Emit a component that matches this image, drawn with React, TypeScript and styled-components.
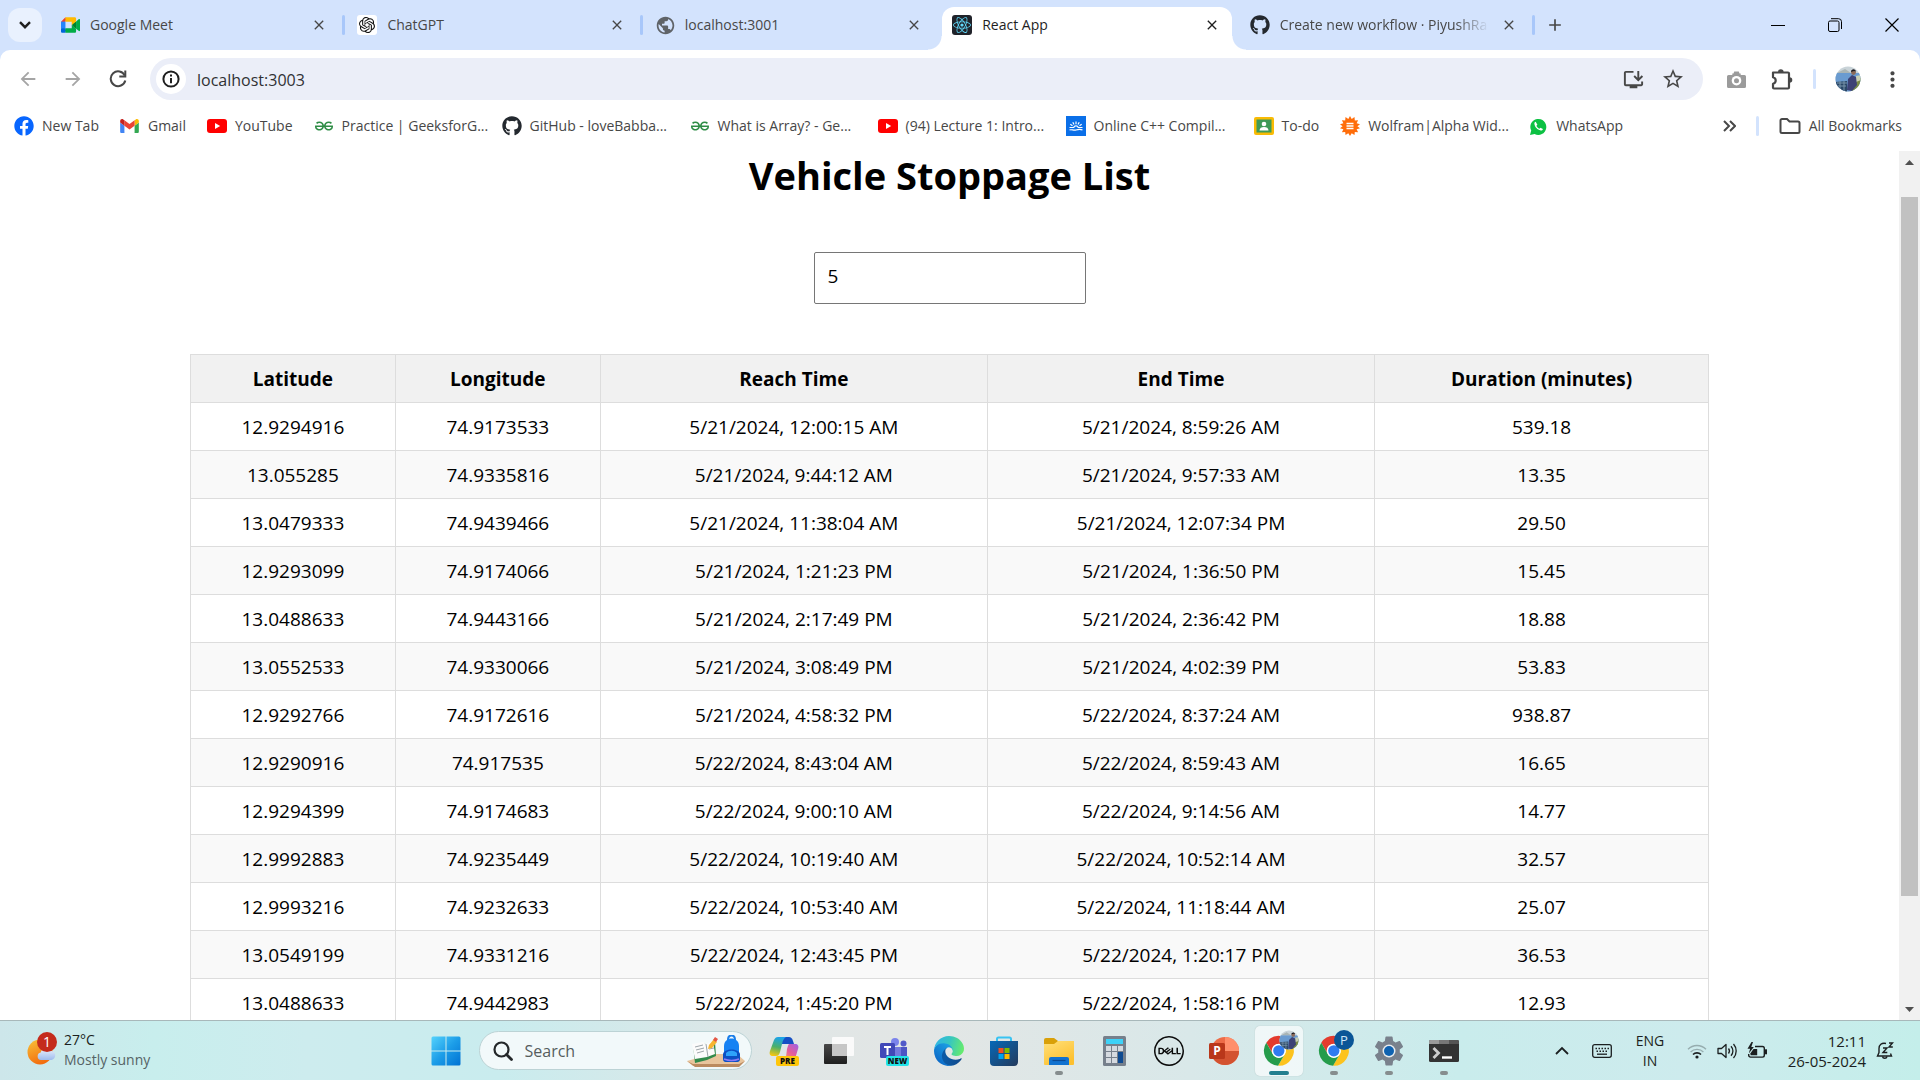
import React from "react";
import styled, { createGlobalStyle, css } from "styled-components";
import { FaFacebook, FaGithub, FaReact } from "react-icons/fa";
import { SiDell, SiGeeksforgeeks, SiOpenai } from "react-icons/si";
import {
  MdAdd,
  MdArrowBack,
  MdArrowForward,
  MdClose,
  MdInstallDesktop,
  MdMoreVert,
  MdPublic,
  MdSettings,
  MdStarBorder,
} from "react-icons/md";

const GlobalStyle = createGlobalStyle`
  *, *::before, *::after { box-sizing: border-box; }
  body {
    margin: 0;
    overflow: hidden;
    background: #fff;
    font-family: "Segoe UI", "Open Sans", "Noto Sans", sans-serif;
  }
  button, input { font-family: inherit; }
  button {
    padding: 0;
    border: 0;
    background: none;
    color: inherit;
  }
  svg { display: block; flex: none; }
`;

const Screen = styled.div`
  display: flex;
  flex-direction: column;
  height: 100vh;
  overflow: hidden;
`;

/* ---------- tab strip ---------- */

const TabStrip = styled.header`
  display: flex;
  align-items: flex-end;
  flex: none;
  height: 50px;
  padding-left: 8px;
  background: #d3e3fd;
`;

const TabSearch = styled.button`
  display: grid;
  place-items: center;
  width: 34px;
  height: 34px;
  margin: 0 4px 8px 0;
  border-radius: 12px;
  background: #e9f1fe;
  color: #1f1f1f;
`;

const Tabs = styled.div`
  display: flex;
  flex: 0 1 1487px;
  min-width: 0;
`;

const Tab = styled.div<{ $active?: boolean; $divider?: boolean }>`
  position: relative;
  display: flex;
  flex: 1 1 0;
  align-items: center;
  min-width: 0;
  height: 43px;
  padding: 0 12px 7px 14px;
  color: ${(p) => (p.$active ? "#1f1f1f" : "#474747")};

  ${(p) =>
    p.$divider &&
    css`
      &::after {
        content: "";
        position: absolute;
        top: 8px;
        right: -2px;
        width: 3px;
        height: 20px;
        border-radius: 2px;
        background: #a8c7fa;
      }
    `}

  ${(p) =>
    p.$active &&
    css`
      z-index: 1;
      isolation: isolate;

      &::before {
        content: "";
        position: absolute;
        z-index: -1;
        inset: 0 4px;
        border-radius: 12px 12px 0 0;
        background: #fff;
      }
    `}
`;

const TabFoot = styled.span<{ $side: "left" | "right" }>`
  position: absolute;
  bottom: 0;
  ${(p) => p.$side}: -10px;
  width: 14px;
  height: 14px;
  background: radial-gradient(
    circle at ${(p) => (p.$side === "left" ? "0 0" : "100% 0")},
    transparent 13px,
    #fff 14px
  );
`;

const TabTitle = styled.button<{ $fade?: boolean }>`
  display: flex;
  flex: 1;
  align-items: center;
  gap: 10px;
  min-width: 0;
  margin-right: 8px;
  overflow: hidden;
  font-size: 14px;
  line-height: 20px;
  white-space: nowrap;
  ${(p) => p.$fade && "mask-image: linear-gradient(90deg, #000 86%, transparent);"}
`;

const Favicon = styled.span<{ $bg?: string }>`
  display: grid;
  flex: none;
  place-items: center;
  width: 20px;
  height: 20px;
  border-radius: 3px;
  background: ${(p) => p.$bg ?? "transparent"};
`;

const CloseTab = styled.button`
  display: grid;
  flex: none;
  place-items: center;
  width: 24px;
  height: 24px;
`;

const NewTab = styled.button`
  display: grid;
  place-items: center;
  width: 34px;
  height: 34px;
  margin: 0 auto 8px 5px;
  color: #474747;
`;

const WindowButton = styled.button`
  display: grid;
  place-items: center;
  align-self: flex-start;
  width: 57px;
  height: 49px;
`;

/* ---------- toolbar ---------- */

const ToolbarWrap = styled.div`
  flex: none;
  background: #d3e3fd;
`;

const Toolbar = styled.div`
  display: flex;
  align-items: center;
  height: 58px;
  padding: 0 5px;
  border-radius: 10px 10px 0 0;
  background: #fff;
`;

const ToolButton = styled.button<{ $tone?: string }>`
  display: grid;
  flex: none;
  place-items: center;
  width: 45px;
  height: 42px;
  color: ${(p) => p.$tone ?? "#474747"};
`;

const Omnibox = styled.div`
  display: flex;
  flex: 1;
  align-items: center;
  height: 42px;
  margin: 0 11px 0 10px;
  padding: 0 10px 0 6px;
  border-radius: 21px;
  background: #ebeef8;
`;

const SiteInfo = styled.button`
  display: grid;
  flex: none;
  place-items: center;
  width: 30px;
  height: 30px;
  margin-right: 11px;
  border-radius: 50%;
  background: #fff;
  color: #1f1f1f;
`;

const Address = styled.input`
  flex: 1;
  min-width: 0;
  padding: 2px 0 0;
  border: 0;
  outline: 0;
  background: transparent;
  color: #303134;
  font-size: 16px;
  line-height: 24px;
`;

const OmniButton = styled.button`
  display: grid;
  place-items: center;
  width: 40px;
  height: 40px;
  color: #474747;
`;

const Rule = styled.span<{ $gap: number }>`
  flex: none;
  width: 3px;
  height: 20px;
  margin: 0 ${(p) => p.$gap}px;
  border-radius: 2px;
  background: #d3e3fd;
`;

/* ---------- bookmarks ---------- */

const BookmarkBar = styled.nav`
  display: flex;
  align-items: center;
  flex: none;
  gap: 21px;
  height: 43px;
  padding: 0 18px 7px 14px;
  background: #fff;
  color: #474747;
`;

const Bookmark = styled.a<{ $wide?: boolean }>`
  display: flex;
  flex: none;
  align-items: center;
  gap: 8px;
  width: ${(p) => (p.$wide ? "167px" : "auto")};
  color: inherit;
  font-size: 14px;
  line-height: 20px;
  text-decoration: none;
  white-space: nowrap;
`;

const BookmarkEnd = styled.div`
  display: flex;
  align-items: center;
  margin-left: auto;
`;

/* ---------- page ---------- */

const Viewport = styled.div`
  display: flex;
  flex: 1;
  min-height: 0;
  overflow: hidden;
  background: #fff;
`;

const Page = styled.main`
  display: flex;
  flex: 1;
  flex-direction: column;
  align-items: center;
  min-width: 0;
  color: #000;
`;

const Heading = styled.h1`
  margin: 0 0 53px;
  font-size: 38px;
  line-height: 48px;
  font-weight: 700;
`;

const MinutesInput = styled.input`
  flex: none;
  width: 272px;
  height: 52px;
  margin-bottom: 50px;
  padding: 8px 13px 12px;
  border: 1px solid #767676;
  border-radius: 2px;
  color: #000;
  font-size: 19px;
`;

const Table = styled.table`
  flex: none;
  width: 80%;
  table-layout: fixed;
  border-collapse: collapse;
  font-size: 19px;
  line-height: 26px;
  text-align: center;

  th,
  td {
    height: 48px;
    padding: 0 8px;
    border: 1px solid #ddd;
  }

  th {
    background: #f1f1f1;
    font-weight: 700;
  }

  tbody tr:nth-child(even) {
    background: #f9f9f9;
  }
`;

const Col = styled.col<{ $share: string }>`
  width: ${(p) => p.$share};
`;

const ScrollBar = styled.div`
  display: flex;
  flex: none;
  flex-direction: column;
  width: 21px;
  background: #f1f1f1;
`;

const ScrollArrow = styled.button`
  display: grid;
  place-items: center;
  width: 21px;
  height: 22px;
  color: #505050;
`;

const ScrollSpace = styled.div<{ $grow: number }>`
  flex: ${(p) => p.$grow} 1 0;
`;

const ScrollThumb = styled.div`
  flex: 699 1 0;
  margin: 0 2px;
  background: #c1c1c1;
`;

/* ---------- taskbar ---------- */

const Taskbar = styled.footer`
  display: grid;
  grid-template-columns: 1fr auto 1fr;
  flex: none;
  height: 60px;
  border-top: 1px solid #a8b8ba;
  background: linear-gradient(
    90deg,
    #cde6ea 0%,
    #c8eeed 8%,
    #cdecee 16%,
    #c9ecee 26%,
    #dfe6e6 40%,
    #e3e6e5 48%,
    #d9e8e9 62%,
    #c9ecec 76%,
    #cdebed 88%,
    #c4eeea 100%
  );
`;

const Weather = styled.button`
  display: flex;
  align-items: center;
  justify-self: start;
  gap: 7px;
  padding: 0 0 1px 25px;
  text-align: left;
`;

const Lines = styled.span<{ $align: "left" | "center" | "right"; $large?: boolean }>`
  display: flex;
  flex-direction: column;
  color: #1b1f20;
  font-size: ${(p) => (p.$large ? "15px" : "14px")};
  line-height: 20px;
  text-align: ${(p) => p.$align};
  white-space: nowrap;
`;

const Muted = styled.span`
  color: #566365;
`;

const Apps = styled.div`
  display: flex;
  align-items: center;
  padding-right: 30px;
`;

const AppButton = styled.button`
  display: flex;
  justify-content: center;
  width: 55px;
  height: 50px;
`;

const AppTile = styled.span<{ $active?: boolean }>`
  position: relative;
  display: grid;
  place-items: center;
  width: 48px;
  height: 50px;
  border-radius: 5px;
  background: ${(p) => (p.$active ? "rgba(255,255,255,0.65)" : "transparent")};
  box-shadow: ${(p) => (p.$active ? "0 0 1px rgba(0,0,0,0.25)" : "none")};
`;

const RunMark = styled.span<{ $active?: boolean }>`
  position: absolute;
  bottom: 1px;
  left: 50%;
  width: ${(p) => (p.$active ? "20px" : "8px")};
  height: 4px;
  border-radius: 2px;
  background: ${(p) => (p.$active ? "#237f8f" : "#868d8e")};
  transform: translateX(-50%);
`;

const SearchBox = styled.label`
  display: flex;
  align-items: center;
  width: 273px;
  height: 39px;
  margin: 0 5px;
  padding: 0 6px 0 13px;
  border: 1px solid #bcd3d5;
  border-radius: 20px;
  background: #f2f9fa;
`;

const SearchInput = styled.input`
  flex: 1;
  min-width: 0;
  padding: 0 0 0 12px;
  border: 0;
  outline: 0;
  background: transparent;
  font-size: 16px;

  &::placeholder {
    color: #565d5e;
    opacity: 1;
  }
`;

const Tray = styled.div`
  display: flex;
  align-items: center;
  justify-content: flex-end;
  padding-right: 26px;
  color: #1b1f20;
`;

const TrayButton = styled.button<{ $width: number }>`
  display: grid;
  place-items: center;
  width: ${(p) => p.$width}px;
  height: 48px;
`;

const StatusButton = styled.button`
  display: flex;
  align-items: center;
  justify-content: flex-end;
  gap: 10px;
  width: 97px;
  height: 48px;
  padding-right: 6px;
`;

const Clock = styled.button`
  display: flex;
  align-items: center;
  justify-content: flex-end;
  gap: 10px;
  width: 121px;
  height: 48px;
`;

/* ---------- drawings ---------- */

const ChevronDownIcon = () => (
  <svg width="12" height="8" viewBox="0 0 12 8" fill="none" stroke="currentColor" strokeWidth="2.4">
    <path d="M1 1.200l5 5 5-5" />
  </svg>
);

const ReloadIcon = () => (
  <svg width="18" height="18" viewBox="0 0 18 18" fill="none" stroke="currentColor" strokeWidth="2">
    <path d="M15.800 5.500A7.400 7.400 0 1 0 16.300 10.500" />
    <path d="M16.300.500v6h-6" />
  </svg>
);

const InfoIcon = () => (
  <svg width="18" height="18" viewBox="0 0 18 18" fill="none" stroke="currentColor" strokeWidth="2">
    <circle cx="9" cy="9" r="7.600" />
    <path d="M9 8v5.200M9 4.600v2" />
  </svg>
);

const ExtensionIcon = () => (
  <svg width="22" height="22" viewBox="0 0 22 22">
    <path
      d="M2 4.500h15a1 1 0 0 1 1 1v14a1 1 0 0 1-1 1H3a1 1 0 0 1-1-1v-3.700c3.600-1 3.600-5.600 0-6.600z"
      fill="none"
      stroke="currentColor"
      strokeWidth="2.200"
      strokeLinejoin="round"
    />
    <path d="M7 4a2.800 2.800 0 0 1 5.600 0zM18.500 9.200a2.800 2.800 0 0 1 0 5.600z" fill="currentColor" />
  </svg>
);

const DoubleChevronIcon = () => (
  <svg width="13" height="12" viewBox="0 0 13 12" fill="none" stroke="currentColor" strokeWidth="2">
    <path d="M1 1l5 5-5 5M7 1l5 5-5 5" />
  </svg>
);

const FolderIcon = () => (
  <svg width="22" height="16" viewBox="0 0 22 16" fill="none" stroke="currentColor" strokeWidth="2">
    <path d="M1.500 2.500a1.500 1.500 0 0 1 1.500-1.500h5l2.500 2.500H19A1.500 1.500 0 0 1 20.500 5v8.500A1.500 1.500 0 0 1 19 15H3a1.500 1.500 0 0 1-1.500-1.500z" />
  </svg>
);

const MeetIcon = () => (
  <svg width="19" height="16" viewBox="0 0 87.5 72">
    <path fill="#00832d" d="M49.5 36l8.53 9.75 11.47 7.33 2-17.02-2-16.64-11.69 6.44z" />
    <path fill="#0066da" d="M0 51.5V66c0 3.3 2.7 6 6 6h14.5l3-10.96-3-9.54-9.95-3z" />
    <path fill="#e94235" d="M20.5 0L0 20.5l10.55 3 9.95-3 2.95-9.41z" />
    <path fill="#2684fc" d="M20.5 20.5H0v31h20.5z" />
    <path
      fill="#00ac47"
      d="M82.6 8.68L69.5 19.42v33.66l13.16 10.79c1.97 1.54 4.85.13 4.85-2.37V11c0-2.53-2.95-3.92-4.91-2.32zM49.5 36v15.5h-29V72h43c3.3 0 6-2.7 6-6V53.08z"
    />
    <path fill="#ffba00" d="M63.5 0h-43v20.5h29V36l20-16.57V6c0-3.3-2.7-6-6-6z" />
  </svg>
);

const GmailIcon = () => (
  <svg width="19" height="14" viewBox="52 42 88 66">
    <path fill="#4285f4" d="M58 108h14V74L52 59v43c0 3.32 2.69 6 6 6" />
    <path fill="#34a853" d="M120 108h14c3.32 0 6-2.69 6-6V59l-20 15" />
    <path fill="#fbbc04" d="M120 48v26l20-15v-8c0-7.42-8.47-11.65-14.4-7.2" />
    <path fill="#ea4335" d="M72 74V48l24 18 24-18v26L96 92" />
    <path fill="#c5221f" d="M52 51v8l20 15V48l-5.6-4.2c-5.94-4.45-14.4-.22-14.4 7.2" />
  </svg>
);

const YouTubeIcon = () => (
  <svg width="20" height="14" viewBox="0 0 20 14">
    <rect width="20" height="14" rx="3" fill="#f00" />
    <path d="M8 4l5.2 3L8 10z" fill="#fff" />
  </svg>
);

const CompilerIcon = () => (
  <svg width="20" height="20" viewBox="0 0 20 20">
    <rect width="20" height="20" fill="#0a6fe8" />
    <g stroke="#fff" strokeWidth="1.2" fill="none">
      <path d="M3.5 11.5h4.2a2.4 2.4 0 0 1 4.6 0h4.2M3.5 14c2-1 4 .8 6.5 0s4.500-1 6.500 0" />
      <path d="M10 5.500v2.800M6.800 6.200l1.200 2.400M13.200 6.200L12 8.600M4.300 8.300l2.200 1.500M15.700 8.300l-2.200 1.500" />
    </g>
  </svg>
);

const ClassroomIcon = () => (
  <svg width="20" height="18" viewBox="0 0 20 18">
    <rect width="20" height="18" rx="2" fill="#f9bb05" />
    <rect x="2.500" y="2.500" width="15" height="13" fill="#3f9a57" />
    <circle cx="10" cy="7" r="2.300" fill="#fff" />
    <path d="M5.500 13.500c0-2.500 2-3.600 4.500-3.600s4.500 1.100 4.500 3.600z" fill="#fff" />
  </svg>
);

const WolframIcon = () => (
  <svg width="20" height="20" viewBox="0 0 20 20">
    <path
      fill="#ff6d0a"
      d="M10 0l1.700 3 2.800-1.900.3 3.400 3.300-.3-1.500 3L20 8.300l-2.600 1.900 2.600 2-3.400 1 1.500 3-3.300-.3-.3 3.200-2.800-1.800L10 20l-1.700-2.700-2.800 1.800-.3-3.200-3.300.3 1.500-3-3.400-1 2.600-2L0 8.300l3.400-1.100-1.500-3 3.300.3.3-3.400L8.300 3z"
    />
    <path d="M6.500 7.500h7M6.500 10h7M6.500 12.500h7" stroke="#fff" strokeWidth="1.300" />
  </svg>
);

const WhatsAppIcon = () => (
  <svg width="19" height="19" viewBox="0 0 19 19">
    <path d="M1 18l1.200-4.400A8 8 0 1 1 5.600 17z" fill="#0cc143" />
    <path
      d="M6.700 4.800c-.9.300-1.500 1.200-1.300 2.300.5 3 3 5.800 6.300 6.400 1 .1 2-.4 2.200-1.500l-2.400-1.300-1.100 1.100c-1.300-.6-2.500-1.800-3-3l1-1z"
      fill="#fff"
    />
  </svg>
);

const Portrait = ({ size }: { size: number }) => (
  <svg width={size} height={size} viewBox="0 0 26 26">
    <defs>
      <clipPath id={`portrait${size}`}>
        <circle cx="13" cy="13" r="12.500" />
      </clipPath>
    </defs>
    <g clipPath={`url(#portrait${size})`}>
      <rect width="26" height="26" fill="#c9d3d8" />
      <path d="M2 7l8-4 6 4z" fill="#a9b4b4" />
      <rect y="7" width="26" height="19" fill="#6a9bd0" />
      <path d="M0 16l12-1v11H0z" fill="#2b4868" />
      <path d="M17 14l9-2v14h-9z" fill="#7a8c45" />
      <path d="M21 10l5-1v5l-5 2z" fill="#c9d0b4" />
      <path d="M2 17h10M2 20h9M5 15v10M9 15v10" stroke="#7894ab" />
      <path d="M13 13l4-4 4 2 1 8-5 6-5-1z" fill="#3d4275" />
      <circle cx="18.500" cy="6.500" r="2.400" fill="#8c6a58" />
      <path d="M16 6c0-3 4-4 5-.5l-2-.5z" fill="#1c1a20" />
    </g>
  </svg>
);

const CameraIcon = () => (
  <svg width="19" height="17" viewBox="0 0 19 17">
    <path
      d="M1.500 4h3.800v-1.500h1.200L7.200.500h4.600l.7 2h1.200V4h3.800A1.500 1.500 0 0 1 19 5.500v10a1.500 1.500 0 0 1-1.500 1.500h-16A1.500 1.500 0 0 1 0 15.500v-10A1.500 1.500 0 0 1 1.500 4z"
      fill="#9b9b9b"
    />
    <circle cx="9.500" cy="9.700" r="4.800" fill="#fff" />
    <circle cx="9.500" cy="9.700" r="2.500" fill="#9b9b9b" />
  </svg>
);

const WeatherIcon = () => (
  <svg width="32" height="36" viewBox="0 0 32 36">
    <defs>
      <linearGradient id="sun" x1="0.200" y1="0" x2="0.600" y2="1">
        <stop offset="0" stopColor="#f8bd36" />
        <stop offset="1" stopColor="#f2690d" />
      </linearGradient>
      <linearGradient id="cloud" x1="0" y1="0" x2="0" y2="1">
        <stop offset="0" stopColor="#e8effc" />
        <stop offset="1" stopColor="#9dbbee" />
      </linearGradient>
    </defs>
    <circle cx="15" cy="20" r="12.500" fill="url(#sun)" />
    <path d="M16 28a3.800 3.800 0 0 1-.3-7.500 5 5 0 0 1 9-1.600 4.600 4.600 0 0 1 1.800 9.100z" fill="url(#cloud)" />
    <circle cx="22" cy="10" r="10" fill="#c42b1c" />
    <text x="22" y="15" textAnchor="middle" fontSize="14" fill="#fff">
      1
    </text>
  </svg>
);

const StartIcon = () => (
  <svg width="30" height="30" viewBox="0 0 30 30">
    <defs>
      <linearGradient id="start" gradientUnits="userSpaceOnUse" x1="0" y1="0" x2="30" y2="30">
        <stop offset="0" stopColor="#56d4fd" />
        <stop offset="0.500" stopColor="#1c9de8" />
        <stop offset="1" stopColor="#0070d2" />
      </linearGradient>
    </defs>
    <path
      fill="url(#start)"
      d="M2 0.500h12.500v14H0.500V2A1.500 1.500 0 0 1 2 .5zM15.500.500H28A1.500 1.500 0 0 1 29.500 2v12.500h-14zM.500 15.500h14v14H2A1.500 1.500 0 0 1 .5 28zM15.500 15.500h14V28a1.500 1.500 0 0 1-1.500 1.500H15.500z"
    />
  </svg>
);

const MagnifierIcon = () => (
  <svg width="20" height="20" viewBox="0 0 20 20" fill="none" stroke="#24282a" strokeWidth="2.200">
    <circle cx="8.500" cy="8.500" r="7" />
    <path d="M13.500 13.500l5 5" strokeLinecap="round" strokeWidth="2.800" />
  </svg>
);

const SchoolArt = () => (
  <svg width="58" height="32" viewBox="0 0 58 32">
    <path d="M0 26l24-7h26l8 7-6 5H6z" fill="#e8c49c" />
    <path d="M0 26l6 3h46l6-3-6 6H8z" fill="#bb8a5f" />
    <path d="M6 10l11-2 3 2 8-3 1 14-9 4-12 3z" fill="#318a4b" />
    <path d="M5 9l11-2 3 2 7-3 2 13-8 3-12 2z" fill="#fbfbfb" />
    <path d="M19 9l2 13M8 12l8-2M9 15l8-2M10 18l7-2M22 11l4-1M22 14l5-1" stroke="#9da5aa" fill="none" />
    <path d="M21 14l1-4 5-6 3 3-5 6z" fill="#f7b531" />
    <path d="M26 5l2-3 3 2-2 3z" fill="#e45745" />
    <path d="M41 5c0-6 7-6 7 0" fill="none" stroke="#1c7ee8" strokeWidth="2" />
    <path d="M37 11c0-10 15-10 15 0v13a3 3 0 0 1-3 3h-9a3 3 0 0 1-3-3z" fill="#1682f3" />
    <path d="M36 19c1-6 16-6 17 0v5a3 3 0 0 1-3 3H39a3 3 0 0 1-3-3z" fill="#0c50c4" />
    <path d="M39 18c3-3 8-3 11 0v3H39z" fill="#2ea3fa" />
    <path d="M37 24c5 2 10 2 15 0" stroke="#8c7bf5" fill="none" strokeWidth="1.500" />
  </svg>
);

const CopilotIcon = () => (
  <svg width="30" height="30" viewBox="0 0 30 30">
    <defs>
      <linearGradient id="copA" x1="0.400" y1="0" x2="0.200" y2="1">
        <stop offset="0" stopColor="#1ca3e8" />
        <stop offset="0.500" stopColor="#4bb06a" />
        <stop offset="1" stopColor="#ffc80a" />
      </linearGradient>
      <linearGradient id="copB" x1="1" y1="0" x2="0.300" y2="1">
        <stop offset="0" stopColor="#9b62e8" />
        <stop offset="0.500" stopColor="#e45b9c" />
        <stop offset="1" stopColor="#ff9b62" />
      </linearGradient>
    </defs>
    <path d="M9 1h11c2 0 3 1 4 4l1 3h-7L13 8z" fill="#154fc4" />
    <path d="M9 1h8c-2 1-3 3-4 7l-2 8c-1 3-2 4-4 4H4c-3 0-4-2-3-5L5 4c1-2 2-3 4-3z" fill="url(#copA)" />
    <path d="M20 8h6c3 0 4 2 3 5l-3 10c-1 3-3 4-5 4h-8c2-1 3-3 4-6l1-8c1-3 1-4 2-5z" fill="url(#copB)" />
    <rect x="7" y="20" width="23" height="10" rx="2" fill="#ffc60a" />
    <text x="18.500" y="28" textAnchor="middle" fontSize="8" fontWeight="800" fill="#111">
      PRE
    </text>
  </svg>
);

const TaskViewIcon = () => (
  <svg width="30" height="30" viewBox="0 0 30 30">
    <defs>
      <linearGradient id="tvDark" x1="0" y1="0" x2="0" y2="1">
        <stop offset="0" stopColor="#484848" />
        <stop offset="1" stopColor="#1f1f1f" />
      </linearGradient>
    </defs>
    <rect x="0" y="8" width="23" height="20" rx="1" fill="url(#tvDark)" />
    <rect x="8" y="1" width="22" height="19" rx="1" fill="#fafafa" />
    <path d="M8 8h15v12H8z" fill="#c6c6c6" />
  </svg>
);

const TeamsIcon = () => (
  <svg width="30" height="30" viewBox="0 0 30 30">
    <circle cx="16" cy="6" r="4" fill="#7b83eb" />
    <circle cx="24.500" cy="7.500" r="3" fill="#5059c9" />
    <path d="M10 11h12v13H10z" fill="#7479dd" />
    <path d="M22 11h6v11h-6z" fill="#4d55c5" />
    <rect x="1" y="7" width="15" height="15" rx="1.500" fill="#4148b8" />
    <path d="M5 11h7M8.500 11v8" stroke="#fff" strokeWidth="2" />
    <rect x="7" y="20" width="23" height="10" rx="2" fill="#22e3e8" />
    <text x="18.500" y="28" textAnchor="middle" fontSize="8" fontWeight="800" fill="#111">
      NEW
    </text>
  </svg>
);

const EdgeIcon = () => (
  <svg width="30" height="30" viewBox="0 0 256 256">
    <defs>
      <linearGradient id="edgeA" x1="0.200" y1="0.500" x2="1" y2="0.500">
        <stop offset="0" stopColor="#0c59a4" />
        <stop offset="1" stopColor="#114a8b" />
      </linearGradient>
      <linearGradient id="edgeB" x1="0.800" y1="0.200" x2="0.200" y2="1">
        <stop offset="0" stopColor="#1b9de2" />
        <stop offset="1" stopColor="#0a62c4" />
      </linearGradient>
      <linearGradient id="edgeC" x1="0" y1="0.300" x2="1" y2="0.500">
        <stop offset="0" stopColor="#2fb4e8" />
        <stop offset="0.500" stopColor="#37c6c0" />
        <stop offset="1" stopColor="#66eb6e" />
      </linearGradient>
    </defs>
    <path
      fill="url(#edgeA)"
      d="M231 190.500c-3.400 1.800-6.900 3.400-10.500 4.700a101.900 101.900 0 0 1-35.900 6.400c-47.300 0-88.500-32.500-88.500-74.300a31.500 31.500 0 0 1 16.400-27.300c-42.800 1.800-53.800 46.400-53.800 72.500 0 74 68.100 81.400 82.800 81.400 7.900 0 19.800-2.300 27-4.600l1.300-.4a128.300 128.300 0 0 0 66.600-52.800 4 4 0 0 0-5.400-5.600z"
    />
    <path
      fill="url(#edgeB)"
      d="M105.700 241.400a79.200 79.200 0 0 1-22.700-21.300 80.700 80.700 0 0 1 29.500-120c3.200-1.500 8.500-4.100 15.600-4a32.400 32.400 0 0 1 25.700 13 31.900 31.900 0 0 1 6.300 18.700c0-.2 24.500-79.600-80-79.600-43.900 0-80 41.600-80 78.200a130.200 130.200 0 0 0 12.100 56 128 128 0 0 0 156.400 67 75.500 75.500 0 0 1-62.800-8z"
    />
    <path
      fill="url(#edgeC)"
      d="M152.300 148.900c-.9 1-3.400 2.500-3.400 5.600 0 2.600 1.700 5.200 4.800 7.300 14.300 10 41.400 8.600 41.500 8.600 10.700 0 21.100-2.900 30.300-8.300a61.400 61.400 0 0 0 30.400-52.900c.3-22.400-8-37.300-11.300-43.900C223.500 23.900 177.700 0 128 0 57.600 0 .5 56.600 0 127.100c.5-36.500 36.800-66 80-66 3.500 0 23.500.3 42 10.100 16.300 8.500 24.900 18.900 30.800 29.200 6.200 10.700 7.300 24.100 7.300 29.500 0 5.300-2.700 13.300-7.800 19z"
    />
  </svg>
);

const StoreIcon = () => (
  <svg width="30" height="30" viewBox="0 0 30 30">
    <defs>
      <linearGradient id="store" x1="0" y1="0" x2="1" y2="1">
        <stop offset="0" stopColor="#0669b8" />
        <stop offset="1" stopColor="#243a5c" />
      </linearGradient>
    </defs>
    <path d="M8 6V3a1.500 1.500 0 0 1 1.500-1.500h11A1.500 1.500 0 0 1 22 3v3" fill="none" stroke="#38c3f2" strokeWidth="2" />
    <path d="M1 5h28v21a4 4 0 0 1-4 4H5a4 4 0 0 1-4-4z" fill="url(#store)" />
    <path d="M9.500 12h5v5h-5z" fill="#f25022" />
    <path d="M15.500 12h5v5h-5z" fill="#7fba00" />
    <path d="M9.500 18h5v5h-5z" fill="#00a4ef" />
    <path d="M15.500 18h5v5h-5z" fill="#ffb900" />
  </svg>
);

const ExplorerIcon = () => (
  <svg width="30" height="30" viewBox="0 0 30 30">
    <defs>
      <linearGradient id="folder" x1="0" y1="0" x2="0.600" y2="1">
        <stop offset="0" stopColor="#ffe07a" />
        <stop offset="1" stopColor="#fdc02f" />
      </linearGradient>
    </defs>
    <path d="M0 4a2 2 0 0 1 2-2h8l4 3-2 5H0z" fill="#d9a009" />
    <path d="M0 8h10l4-3h16v23a1 1 0 0 1-1 1H1a1 1 0 0 1-1-1z" fill="url(#folder)" />
    <path d="M5 29v-6a2 2 0 0 1 2-2h16a2 2 0 0 1 2 2v6z" fill="#1272cf" />
    <path d="M8.500 24.500h13" stroke="#0b4a94" strokeWidth="1.200" />
  </svg>
);

const CalculatorIcon = () => (
  <svg width="23" height="30" viewBox="0 0 23 30">
    <rect width="23" height="30" rx="1.500" fill="#76808c" />
    <rect x="3" y="3" width="17" height="5" fill="#3ed2f8" />
    {[10, 16, 22].map((y) =>
      [3, 9, 15].map((x) => <rect key={`${x}-${y}`} x={x} y={y} width="5" height="5" fill="#d5dae0" />)
    )}
    <rect x="15" y="16" width="5" height="11" fill="#0f4b91" />
  </svg>
);

const PowerPointIcon = () => (
  <svg width="30" height="30" viewBox="0 0 30 30">
    <circle cx="16" cy="15" r="14" fill="#ed6c47" />
    <path d="M16 1a14 14 0 0 1 14 14H16z" fill="#ff8f6b" />
    <path d="M2 15h28a14 14 0 0 1-28 0z" fill="#d35230" />
    <rect x="0" y="7" width="16" height="16" rx="1.500" fill="#b9371a" />
    <text x="8" y="19" textAnchor="middle" fontSize="12" fontWeight="700" fill="#fff">
      P
    </text>
  </svg>
);

const ChromeIcon = ({ badge }: { badge: "portrait" | "letter" }) => (
  <svg width="42" height="42" viewBox="0 0 42 42">
    <g transform="translate(4.500 4.500) scale(0.680)">
      <path d="M5.540 12.030A22 22 0 0 1 43.600 14H24a10 10 0 0 0-8.660 15z" fill="#e33b2e" />
      <path d="M43.600 14a22 22 0 0 1-20.740 31.970L32.660 29A10 10 0 0 0 24 14z" fill="#fcc31e" />
      <path d="M22.860 45.970A22 22 0 0 1 5.540 12.030L15.340 29a10 10 0 0 0 17.320 0z" fill="#259c4b" />
      <circle cx="24" cy="24" r="10.500" fill="#fff" />
      <circle cx="24" cy="24" r="8.300" fill="#2f7bf0" />
    </g>
    {badge === "portrait" ? (
      <g transform="translate(21 0)">
        <Portrait size={20} />
      </g>
    ) : (
      <>
        <circle cx="31" cy="10" r="10" fill="#0a5597" />
        <text x="31" y="15" textAnchor="middle" fontSize="13" fill="#cfe6f8">
          P
        </text>
      </>
    )}
  </svg>
);

const SettingsIcon = () => (
  <svg width="30" height="30" viewBox="0 0 30 30">
    <MdSettings x={-3} y={-3} size={36} color="#79818c" />
    <circle cx="15" cy="15" r="7.500" fill="#79818c" />
    <circle cx="15" cy="15" r="6.500" fill="#e7ebee" />
    <circle cx="15" cy="15" r="5" fill="#0f62b0" />
  </svg>
);

const TerminalIcon = () => (
  <svg width="30" height="22" viewBox="0 0 30 22">
    <rect width="30" height="22" rx="1.500" fill="#333" />
    <path d="M1.500 0H10v4H0V1.500A1.500 1.500 0 0 1 1.500 0z" fill="#9a9a9a" />
    <path d="M10 0h10v4H10z" fill="#777" />
    <path d="M20 0h8.500A1.500 1.500 0 0 1 30 1.500V4H20z" fill="#555" />
    <path d="M4.500 8l5 5-5 5" fill="none" stroke="#ccc" strokeWidth="2.800" />
    <path d="M13 17.500h10" stroke="#fff" strokeWidth="2.400" />
  </svg>
);

const ChevronUpIcon = () => (
  <svg width="14" height="9" viewBox="0 0 14 9" fill="none" stroke="currentColor" strokeWidth="1.800">
    <path d="M1 8l6-6 6 6" />
  </svg>
);

const KeyboardIcon = () => (
  <svg width="20" height="14" viewBox="0 0 20 14" fill="none" stroke="currentColor">
    <rect x="0.700" y="0.700" width="18.600" height="12.600" rx="2" strokeWidth="1.300" />
    <path d="M3.500 4.500h14M4.500 7.200h12" strokeWidth="1.500" strokeDasharray="1.500 1.500" />
    <path d="M5 10.200h10" strokeWidth="1.300" />
  </svg>
);

const WifiIcon = () => (
  <svg width="20" height="16" viewBox="0 0 20 16" fill="none" stroke="currentColor">
    <path d="M1 6.200a12.800 12.800 0 0 1 18 0M3.600 9a9 9 0 0 1 12.800 0" opacity="0.300" strokeWidth="1.300" />
    <path d="M6 11.500a5.700 5.700 0 0 1 8 0" strokeWidth="1.600" />
    <circle cx="10" cy="14" r="1.600" fill="currentColor" stroke="none" />
  </svg>
);

const VolumeIcon = () => (
  <svg width="20" height="18" viewBox="0 0 20 18" fill="none" stroke="currentColor" strokeWidth="1.300">
    <path d="M1 6.500h3.500L9 2.500v13l-4.500-4H1z" strokeLinejoin="round" />
    <path d="M11.500 6.500a4 4 0 0 1 0 5M14 4.200a7 7 0 0 1 0 9.600M16.500 2a10.500 10.500 0 0 1 0 14" />
  </svg>
);

const BatteryIcon = () => (
  <svg width="20" height="18" viewBox="0 0 20 18" fill="none" stroke="currentColor" strokeWidth="1.400">
    <path d="M8 4.500h7.500a1.800 1.800 0 0 1 1.800 1.800v7a1.800 1.800 0 0 1-1.800 1.800h-12a1.800 1.800 0 0 1-1.800-1.800V12" />
    <path d="M18.300 8h1.200v3.600h-1.200z" fill="currentColor" />
    <path d="M3.500 13.300v-2l3-4.300h3.700v6.300z" fill="currentColor" stroke="none" />
    <path d="M4.500 0L.5 6.800h2.600L1.800 11.500l5-6.500H4.300L6 0z" fill="currentColor" stroke="none" />
  </svg>
);

const BellIcon = () => (
  <svg width="18" height="18" viewBox="0 0 18 18" fill="none" stroke="currentColor" strokeWidth="1.400">
    <path d="M10 1.500C5.500.5 3 3 3 6.500v4L1.500 14h14L14.500 11.500" />
    <path d="M6.500 14.500a2.300 2.300 0 0 0 4.500 0" />
    <path d="M7 6h4l-4 4.500h4.300M13 1h3.500L13 5h3.800" />
  </svg>
);

/* ---------- data ---------- */

type TabInfo = {
  title: string;
  icon: React.ReactNode;
  bg?: string;
  active?: boolean;
  divider?: boolean;
  fade?: boolean;
};

const tabs: TabInfo[] = [
  { title: "Google Meet", icon: <MeetIcon />, divider: true },
  { title: "ChatGPT", icon: <SiOpenai size={16} color="#111" />, bg: "#fff", divider: true },
  { title: "localhost:3001", icon: <MdPublic size={21} color="#5f6368" /> },
  { title: "React App", icon: <FaReact size={18} color="#61dafb" />, bg: "#20232a", active: true },
  {
    title: "Create new workflow · PiyushRa",
    icon: <FaGithub size={20} color="#24292f" />,
    divider: true,
    fade: true,
  },
];

type BookmarkInfo = { label: string; icon: React.ReactNode; wide?: boolean };

const bookmarks: BookmarkInfo[] = [
  { label: "New Tab", icon: <FaFacebook size={20} color="#0866ff" /> },
  { label: "Gmail", icon: <GmailIcon /> },
  { label: "YouTube", icon: <YouTubeIcon /> },
  { label: "Practice | GeeksforG...", icon: <SiGeeksforgeeks size={18} color="#2f8d46" />, wide: true },
  { label: "GitHub - loveBabba...", icon: <FaGithub size={20} color="#24292f" />, wide: true },
  { label: "What is Array? - Ge...", icon: <SiGeeksforgeeks size={18} color="#2f8d46" />, wide: true },
  { label: "(94) Lecture 1: Intro...", icon: <YouTubeIcon />, wide: true },
  { label: "Online C++ Compil...", icon: <CompilerIcon />, wide: true },
  { label: "To-do", icon: <ClassroomIcon /> },
  { label: "Wolfram|Alpha Wid...", icon: <WolframIcon />, wide: true },
  { label: "WhatsApp", icon: <WhatsAppIcon /> },
];

const stops: string[][] = [
  ["12.9294916", "74.9173533", "5/21/2024, 12:00:15 AM", "5/21/2024, 8:59:26 AM", "539.18"],
  ["13.055285", "74.9335816", "5/21/2024, 9:44:12 AM", "5/21/2024, 9:57:33 AM", "13.35"],
  ["13.0479333", "74.9439466", "5/21/2024, 11:38:04 AM", "5/21/2024, 12:07:34 PM", "29.50"],
  ["12.9293099", "74.9174066", "5/21/2024, 1:21:23 PM", "5/21/2024, 1:36:50 PM", "15.45"],
  ["13.0488633", "74.9443166", "5/21/2024, 2:17:49 PM", "5/21/2024, 2:36:42 PM", "18.88"],
  ["13.0552533", "74.9330066", "5/21/2024, 3:08:49 PM", "5/21/2024, 4:02:39 PM", "53.83"],
  ["12.9292766", "74.9172616", "5/21/2024, 4:58:32 PM", "5/22/2024, 8:37:24 AM", "938.87"],
  ["12.9290916", "74.917535", "5/22/2024, 8:43:04 AM", "5/22/2024, 8:59:43 AM", "16.65"],
  ["12.9294399", "74.9174683", "5/22/2024, 9:00:10 AM", "5/22/2024, 9:14:56 AM", "14.77"],
  ["12.9992883", "74.9235449", "5/22/2024, 10:19:40 AM", "5/22/2024, 10:52:14 AM", "32.57"],
  ["12.9993216", "74.9232633", "5/22/2024, 10:53:40 AM", "5/22/2024, 11:18:44 AM", "25.07"],
  ["13.0549199", "74.9331216", "5/22/2024, 12:43:45 PM", "5/22/2024, 1:20:17 PM", "36.53"],
  ["13.0488633", "74.9442983", "5/22/2024, 1:45:20 PM", "5/22/2024, 1:58:16 PM", "12.93"],
];

type AppInfo = { name: string; icon: React.ReactNode; running?: boolean; active?: boolean };

const apps: AppInfo[] = [
  { name: "Copilot", icon: <CopilotIcon /> },
  { name: "Task View", icon: <TaskViewIcon /> },
  { name: "Teams", icon: <TeamsIcon /> },
  { name: "Edge", icon: <EdgeIcon /> },
  { name: "Store", icon: <StoreIcon /> },
  { name: "File Explorer", icon: <ExplorerIcon />, running: true },
  { name: "Calculator", icon: <CalculatorIcon /> },
  { name: "Dell", icon: <SiDell size={30} color="#0b0b0b" /> },
  { name: "PowerPoint", icon: <PowerPointIcon /> },
  { name: "Chrome", icon: <ChromeIcon badge="portrait" />, running: true, active: true },
  { name: "Chrome, second profile", icon: <ChromeIcon badge="letter" />, running: true },
  { name: "Settings", icon: <SettingsIcon />, running: true },
  { name: "Terminal", icon: <TerminalIcon />, running: true },
];

export default function App() {
  return (
    <Screen>
      <GlobalStyle />
      <TabStrip>
        <TabSearch aria-label="Search tabs">
          <ChevronDownIcon />
        </TabSearch>
        <Tabs>
          {tabs.map((tab) => (
            <Tab key={tab.title} $active={tab.active} $divider={tab.divider}>
              {tab.active && (
                <>
                  <TabFoot $side="left" />
                  <TabFoot $side="right" />
                </>
              )}
              <TabTitle $fade={tab.fade}>
                <Favicon $bg={tab.bg}>{tab.icon}</Favicon>
                {tab.title}
              </TabTitle>
              <CloseTab aria-label="Close tab">
                <MdClose size={16} />
              </CloseTab>
            </Tab>
          ))}
        </Tabs>
        <NewTab aria-label="New tab">
          <MdAdd size={20} />
        </NewTab>
        <WindowButton aria-label="Minimize">
          <svg width="14" height="14" viewBox="0 0 14 14">
            <path d="M0 7.500h14" stroke="#000" />
          </svg>
        </WindowButton>
        <WindowButton aria-label="Restore">
          <svg width="14" height="14" viewBox="0 0 14 14" fill="none" stroke="#000">
            <rect x="0.500" y="3" width="10.500" height="10.500" rx="1.500" />
            <path d="M3 .7h7.500a3 3 0 0 1 3 3V11" />
          </svg>
        </WindowButton>
        <WindowButton aria-label="Close window">
          <svg width="14" height="14" viewBox="0 0 14 14" stroke="#000" strokeWidth="1.200">
            <path d="M.5.500l13 13M13.500.500l-13 13" />
          </svg>
        </WindowButton>
      </TabStrip>

      <ToolbarWrap>
        <Toolbar>
          <ToolButton aria-label="Back" $tone="#a5a5a5">
            <MdArrowBack size={22} />
          </ToolButton>
          <ToolButton aria-label="Forward" $tone="#a5a5a5">
            <MdArrowForward size={22} />
          </ToolButton>
          <ToolButton aria-label="Reload">
            <ReloadIcon />
          </ToolButton>
          <Omnibox>
            <SiteInfo aria-label="Site information">
              <InfoIcon />
            </SiteInfo>
            <Address aria-label="Address" defaultValue="localhost:3003" />
            <OmniButton aria-label="Install app">
              <MdInstallDesktop size={23} />
            </OmniButton>
            <OmniButton aria-label="Bookmark this page">
              <MdStarBorder size={24} />
            </OmniButton>
          </Omnibox>
          <ToolButton aria-label="Screenshot">
            <CameraIcon />
          </ToolButton>
          <ToolButton aria-label="Extensions">
            <ExtensionIcon />
          </ToolButton>
          <Rule $gap={9} />
          <ToolButton aria-label="Profile">
            <Portrait size={26} />
          </ToolButton>
          <ToolButton aria-label="Menu">
            <MdMoreVert size={25} />
          </ToolButton>
        </Toolbar>
      </ToolbarWrap>

      <BookmarkBar aria-label="Bookmarks">
        {bookmarks.map((b) => (
          <Bookmark key={b.label} href="#" $wide={b.wide}>
            <Favicon>{b.icon}</Favicon>
            {b.label}
          </Bookmark>
        ))}
        <BookmarkEnd>
          <DoubleChevronIcon />
          <Rule $gap={20} />
          <Bookmark href="#">
            <FolderIcon />
            All Bookmarks
          </Bookmark>
        </BookmarkEnd>
      </BookmarkBar>

      <Viewport>
        <Page>
          <Heading>Vehicle Stoppage List</Heading>
          <MinutesInput type="text" inputMode="numeric" aria-label="Minimum stoppage in minutes" defaultValue="5" />
          <Table>
            <colgroup>
              <Col $share="13.5%" />
              <Col $share="13.5%" />
              <Col $share="25.5%" />
              <Col $share="25.5%" />
              <Col $share="22%" />
            </colgroup>
            <thead>
              <tr>
                <th scope="col">Latitude</th>
                <th scope="col">Longitude</th>
                <th scope="col">Reach Time</th>
                <th scope="col">End Time</th>
                <th scope="col">Duration (minutes)</th>
              </tr>
            </thead>
            <tbody>
              {stops.map((row) => (
                <tr key={row[2]}>
                  {row.map((cell, i) => (
                    <td key={i}>{cell}</td>
                  ))}
                </tr>
              ))}
            </tbody>
          </Table>
        </Page>
        <ScrollBar>
          <ScrollArrow aria-label="Scroll up">
            <svg width="9" height="5" viewBox="0 0 9 5">
              <path d="M0 5l4.500-5L9 5z" fill="currentColor" />
            </svg>
          </ScrollArrow>
          <ScrollSpace $grow={24} />
          <ScrollThumb />
          <ScrollSpace $grow={102} />
          <ScrollArrow aria-label="Scroll down">
            <svg width="9" height="5" viewBox="0 0 9 5">
              <path d="M0 0l4.500 5L9 0z" fill="currentColor" />
            </svg>
          </ScrollArrow>
        </ScrollBar>
      </Viewport>

      <Taskbar>
        <Weather>
          <WeatherIcon />
          <Lines $align="left">
            <span>27°C</span>
            <Muted>Mostly sunny</Muted>
          </Lines>
        </Weather>
        <Apps>
          <AppButton aria-label="Start">
            <AppTile>
              <StartIcon />
            </AppTile>
          </AppButton>
          <SearchBox>
            <MagnifierIcon />
            <SearchInput type="search" placeholder="Search" aria-label="Search" />
            <SchoolArt />
          </SearchBox>
          {apps.map((app) => (
            <AppButton key={app.name} aria-label={app.name}>
              <AppTile $active={app.active}>
                {app.icon}
                {app.running && <RunMark $active={app.active} />}
              </AppTile>
            </AppButton>
          ))}
        </Apps>
        <Tray>
          <TrayButton $width={36} aria-label="Hidden icons">
            <ChevronUpIcon />
          </TrayButton>
          <TrayButton $width={44} aria-label="Touch keyboard">
            <KeyboardIcon />
          </TrayButton>
          <TrayButton $width={52} aria-label="Input language">
            <Lines $align="center">
              <span>ENG</span>
              <span>IN</span>
            </Lines>
          </TrayButton>
          <StatusButton aria-label="Network, volume and battery">
            <WifiIcon />
            <VolumeIcon />
            <BatteryIcon />
          </StatusButton>
          <Clock>
            <Lines $align="right" $large>
              <span>12:11</span>
              <span>26-05-2024</span>
            </Lines>
            <BellIcon />
          </Clock>
        </Tray>
      </Taskbar>
    </Screen>
  );
}
